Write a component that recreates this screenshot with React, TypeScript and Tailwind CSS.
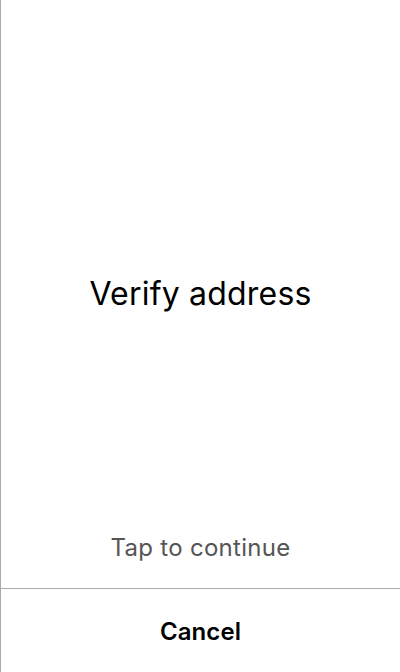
export default function App() {
  return (
    <div
      className="flex h-[672px] w-[400px] flex-col border-l border-[#aaaaaa] bg-white"
      style={{ fontFamily: "Inter, 'Noto Sans', sans-serif" }}
    >
      {/* tap area: heading centered in the whole area, hint pinned to its bottom */}
      <div className="grid flex-1">
        <div className="col-start-1 row-start-1 flex items-center justify-center">
          <h1 className="text-[32px] font-normal tracking-[0.2px] text-black">Verify address</h1>
        </div>
        <div className="col-start-1 row-start-1 flex items-end justify-center pb-[22px]">
          <p className="text-[24px] tracking-[0.3px] text-[#555555]">Tap to continue</p>
        </div>
      </div>

      {/* footer */}
      <div className="flex h-[84px] items-center justify-center border-t border-[#aaaaaa]">
        <button className="pt-[2px] text-[24px] font-semibold tracking-[0.1px] text-black">Cancel</button>
      </div>
    </div>
  )
}
